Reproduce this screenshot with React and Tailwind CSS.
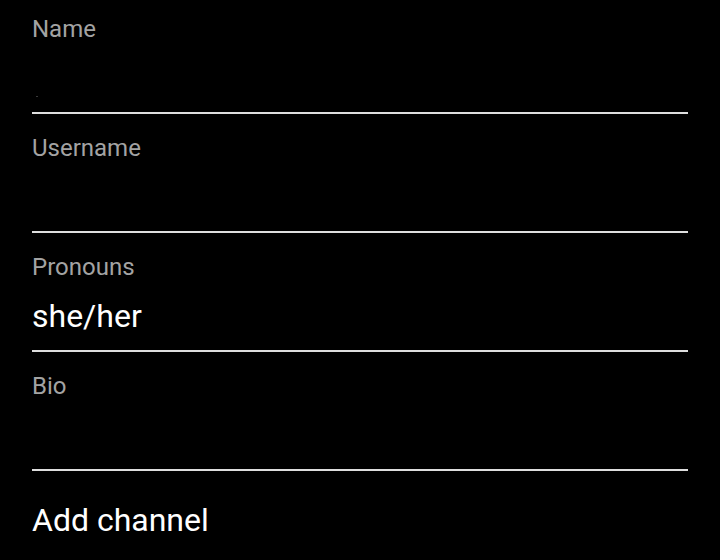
import React from "react";

function Field({ label, value, first, children }) {
  return (
    <div className="flex flex-col h-[119px] pt-[18px] border-b-2 border-[#dedede] relative">
      <div className="h-[32px] leading-[32px] text-[24px] text-[#a3a3a3]">{label}</div>
      <div className="mt-[13px] h-[40px] leading-[40px] text-[32px] text-white">{value}</div>
      {children}
    </div>
  );
}

export default function App() {
  return (
    <div
      className="w-[720px] h-[560px] bg-black overflow-hidden"
      style={{ fontFamily: "Roboto, 'Liberation Sans', sans-serif" }}
    >
      <div className="-mt-[5px] px-8">
        <Field label="Name" value="">
          <div className="absolute left-[4px] top-[101px] w-[2px] h-[1px] bg-[#3a3a3a]" />
        </Field>
        <Field label="Username" value="" />
        <Field label="Pronouns" value="she/her" />
        <Field label="Bio" value="" />
        <div className="pt-[29px] h-[40px] leading-[40px] text-[32px] text-white">Add channel</div>
      </div>
    </div>
  );
}
